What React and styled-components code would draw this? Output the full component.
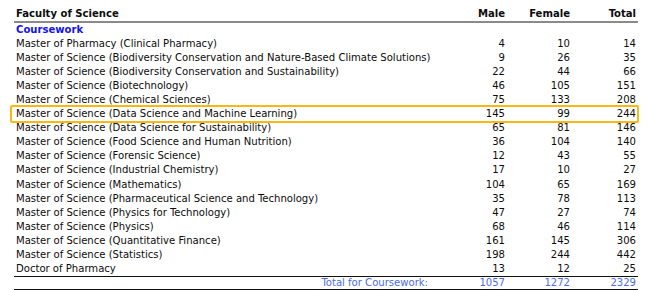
import styled, { createGlobalStyle } from "styled-components";

const rows = [
  ["Master of Pharmacy (Clinical Pharmacy)", 4, 10, 14],
  ["Master of Science (Biodiversity Conservation and Nature-Based Climate Solutions)", 9, 26, 35],
  ["Master of Science (Biodiversity Conservation and Sustainability)", 22, 44, 66],
  ["Master of Science (Biotechnology)", 46, 105, 151],
  ["Master of Science (Chemical Sciences)", 75, 133, 208],
  ["Master of Science (Data Science and Machine Learning)", 145, 99, 244, true],
  ["Master of Science (Data Science for Sustainability)", 65, 81, 146],
  ["Master of Science (Food Science and Human Nutrition)", 36, 104, 140],
  ["Master of Science (Forensic Science)", 12, 43, 55],
  ["Master of Science (Industrial Chemistry)", 17, 10, 27],
  ["Master of Science (Mathematics)", 104, 65, 169],
  ["Master of Science (Pharmaceutical Science and Technology)", 35, 78, 113],
  ["Master of Science (Physics for Technology)", 47, 27, 74],
  ["Master of Science (Physics)", 68, 46, 114],
  ["Master of Science (Quantitative Finance)", 161, 145, 306],
  ["Master of Science (Statistics)", 198, 244, 442],
  ["Doctor of Pharmacy", 13, 12, 25],
];

function App() {
  return (
    <>
      <GlobalStyle />
      <Table>
        <HeadRow>
          <Cell>Faculty of Science</Cell>
          <Num>Male</Num>
          <Num>Female</Num>
          <Num>Total</Num>
        </HeadRow>
        <Section>Coursework</Section>
        {rows.map(([name, m, f, t, hl]) => (
          <Row key={name} $highlight={hl}>
            <Cell>{name}</Cell>
            <Num>{m}</Num>
            <Num>{f}</Num>
            <Num>{t}</Num>
          </Row>
        ))}
        <TotalRow>
          <TotalLabel>Total for Coursework:</TotalLabel>
          <Num>1057</Num>
          <Num>1272</Num>
          <Num>2329</Num>
        </TotalRow>
      </Table>
    </>
  );
}

const GlobalStyle = createGlobalStyle`
  body {
    margin: 0;
    background: #fff;
    font-family: "DejaVu Sans Condensed", "DejaVu Sans", sans-serif;
    font-size: 11.2px;
    color: #0c0c0c;
  }
`;

const Table = styled.div`
  width: 624px;
  margin: 7px 0 0 14px;
`;

const Row = styled.div`
  position: relative;
  display: grid;
  grid-template-columns: 1fr 65px 65px 66px;
  line-height: 14.1px;

  ${(p) =>
    p.$highlight &&
    `
    &::after {
      content: "";
      position: absolute;
      left: -4px;
      right: -1px;
      top: -2px;
      bottom: -2px;
      border: 2px solid #fbb80f;
      border-radius: 2px;
    }
  `}
`;

const HeadRow = styled(Row)`
  font-weight: bold;
  border-bottom: 2px solid #8a8a8a;
`;

const TotalRow = styled(Row)`
  color: #4a6cf2;
  line-height: 12px;
  border-top: 1px solid #111;
  border-bottom: 1px solid #111;
`;

const Cell = styled.div`
  padding: 0 2px;
  white-space: nowrap;
`;

const Num = styled(Cell)`
  text-align: right;
`;

const TotalLabel = styled(Cell)`
  text-align: right;
  padding-right: 14px;
`;

const Section = styled.div`
  padding: 0 2px;
  line-height: 13.5px;
  font-weight: bold;
  color: #1414f0;
`;

export default App;
